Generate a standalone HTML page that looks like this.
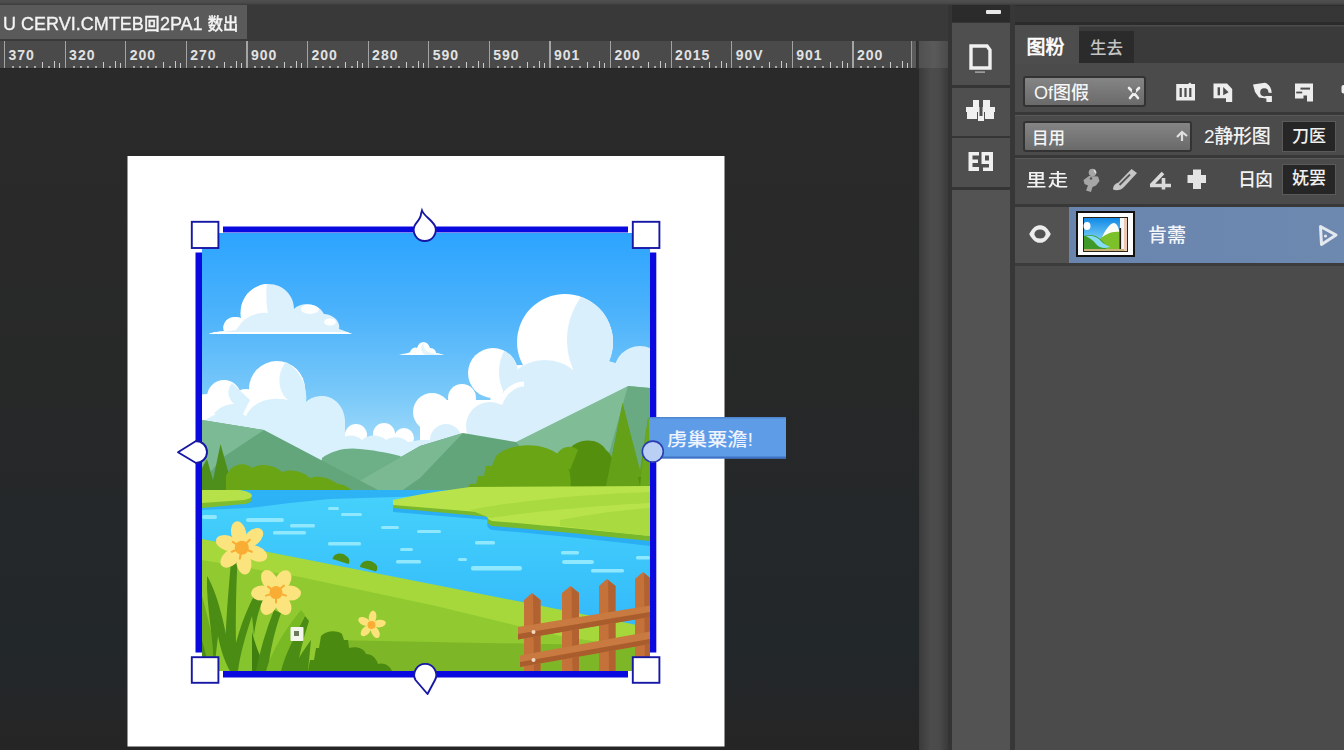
<!DOCTYPE html>
<html lang="zh">
<head>
<meta charset="utf-8">
<title>PS</title>
<style>
*{box-sizing:border-box;margin:0;padding:0}
html,body{width:1344px;height:750px;overflow:hidden;background:#252525;font-family:"Liberation Sans","Noto Sans CJK SC",sans-serif;}
#root{position:relative;width:1344px;height:750px;overflow:hidden;background:#242526;}
.abs{position:absolute}
#topstrip{left:0;top:0;width:1344px;height:5px;background:linear-gradient(#505050,#4a4a4a 60%,#3a3a3a);}
#tabbar{left:0;top:5px;width:950px;height:36px;background:#393939;}
#doctab{left:0;top:5px;width:247px;height:34px;background:#5a5a5a;color:#f4f4f4;font-size:19px;line-height:37px;white-space:nowrap;padding-left:3px;overflow:hidden;font-weight:500;-webkit-text-stroke:0.35px #f4f4f4}
#doctab span{display:inline-block;transform-origin:0 50%;transform:scaleX(0.948)}
#ruler{left:0;top:41px;width:911px;height:27px;background:#4a4a4a;overflow:hidden}
#ruler b{position:absolute;bottom:0;width:1.5px;background:#d4d4d4}
#ruler u{position:absolute;bottom:0;width:2px;height:2.5px;background:#a9a9a9}
#ruler span{position:absolute;top:7px;font-size:14px;font-weight:bold;color:#e2e2e2;letter-spacing:1px;line-height:14px}
#ruler b{position:absolute;bottom:0;width:1.3px;background:#c9c9c9}
#ruler i{position:absolute;top:0;width:1.2px;height:27px;background:#a4a4a4}
#rcorner{left:911px;top:41px;width:8px;height:27px;background:#5a5a5a;border-left:1px solid #9a9a9a}
#vscroll{left:916px;top:41px;width:33px;height:709px;background:linear-gradient(to right,#2c2c2c,#3c3c3c 12%,#4c4c4c 45%,#4a4a4a 70%,#383838)}
#vscrollh{left:919px;top:41px;width:30px;height:27px;background:linear-gradient(to right,#505050,#5a5a5a 50%,#4a4a4a)}
#gap1{left:948px;top:5px;width:4px;height:745px;background:#343434}
#strip{left:952px;top:5px;width:58px;height:745px;background:#353535}
#striptop{left:952px;top:5px;width:58px;height:17px;background:#2b2b2b}
.sbtn{left:952px;width:58px;background:#4f4f4f}
#gap2{left:1010px;top:5px;width:5px;height:745px;background:#373737}
#panel{left:1015px;top:5px;width:329px;height:745px;background:#4b4b4b}
#ptop{left:1015px;top:5px;width:329px;height:20px;background:#363636;border-bottom:3px solid #2b2b2b;border-top:1px solid #2e2e2e}
#ptabs{left:1015px;top:25px;width:329px;height:38px;background:#3a3a3a;box-shadow:inset 0 1.5px 0 #4c4c4c}
#ptab1{left:1015px;top:26px;width:64px;height:38px;background:#4d4d4d;color:#fff;font-size:19px;line-height:43px;text-align:left;padding-left:11.5px;font-weight:500;-webkit-text-stroke:0.4px #fff}
#ptab2{left:1079px;top:31px;width:55px;height:32px;background:#2b2b2b;color:#c4c4c4;font-size:16.5px;line-height:34px;text-align:center;font-weight:500}
.sep{left:1015px;width:329px;height:4px;background:#383838;border-bottom:1.5px solid #595959}
.dd{background:linear-gradient(#858585,#6a6a6a);border:2px solid #333;border-radius:3px;color:#f6f6f6;font-size:18px;white-space:nowrap;font-weight:500}
.dark{background:#262626;border:1px solid #5a5a5a;color:#f0f0f0;font-size:17px;text-align:center;font-weight:500}
.lbl{color:#f2f2f2;font-size:17px;white-space:nowrap;font-weight:500}
#layer{left:1069px;top:207px;width:275px;height:56px;background:linear-gradient(to right,#6985ae,#6e89b0)}
#eyecol{left:1015px;top:207px;width:54px;height:56px;background:#525252}
</style>
</head>
<body>
<div id="root">
<div id="topstrip" class="abs"></div>
<div id="tabbar" class="abs"></div>
<div id="doctab" class="abs"><span id="dts">U CERVI.CMTEB<span style="font-size:17px">回</span>2PA1 <span style="font-size:17px">数出</span></span></div>
<div id="ruler" class="abs"><i style="left:4.0px"></i><span style="left:8.5px">370</span><u style="left:12px"></u><u style="left:19px"></u><u style="left:26px"></u><u style="left:34px"></u><u style="left:48px"></u><b style="left:42px;height:6px"></b><b style="left:54px;height:7px"></b><b style="left:59px;height:5px"></b><i style="left:64.6px"></i><span style="left:69.1px">320</span><u style="left:73px"></u><u style="left:80px"></u><u style="left:87px"></u><u style="left:95px"></u><u style="left:109px"></u><b style="left:103px;height:6px"></b><b style="left:115px;height:7px"></b><b style="left:120px;height:5px"></b><i style="left:125.2px"></i><span style="left:129.7px">200</span><u style="left:133px"></u><u style="left:140px"></u><u style="left:147px"></u><u style="left:155px"></u><u style="left:169px"></u><b style="left:163px;height:6px"></b><b style="left:175px;height:7px"></b><b style="left:180px;height:5px"></b><i style="left:185.8px"></i><span style="left:190.3px">270</span><u style="left:194px"></u><u style="left:201px"></u><u style="left:208px"></u><u style="left:216px"></u><u style="left:230px"></u><b style="left:224px;height:6px"></b><b style="left:236px;height:7px"></b><b style="left:241px;height:5px"></b><i style="left:246.4px"></i><span style="left:250.9px">900</span><u style="left:254px"></u><u style="left:261px"></u><u style="left:268px"></u><u style="left:276px"></u><u style="left:290px"></u><b style="left:284px;height:6px"></b><b style="left:296px;height:7px"></b><b style="left:301px;height:5px"></b><i style="left:307.0px"></i><span style="left:311.5px">200</span><u style="left:315px"></u><u style="left:322px"></u><u style="left:329px"></u><u style="left:337px"></u><u style="left:351px"></u><b style="left:345px;height:6px"></b><b style="left:357px;height:7px"></b><b style="left:362px;height:5px"></b><i style="left:367.6px"></i><span style="left:372.1px">280</span><u style="left:376px"></u><u style="left:383px"></u><u style="left:390px"></u><u style="left:398px"></u><u style="left:412px"></u><b style="left:406px;height:6px"></b><b style="left:418px;height:7px"></b><b style="left:423px;height:5px"></b><i style="left:428.2px"></i><span style="left:432.7px">590</span><u style="left:436px"></u><u style="left:443px"></u><u style="left:450px"></u><u style="left:458px"></u><u style="left:472px"></u><b style="left:466px;height:6px"></b><b style="left:478px;height:7px"></b><b style="left:483px;height:5px"></b><i style="left:488.8px"></i><span style="left:493.3px">590</span><u style="left:497px"></u><u style="left:504px"></u><u style="left:511px"></u><u style="left:519px"></u><u style="left:533px"></u><b style="left:527px;height:6px"></b><b style="left:539px;height:7px"></b><b style="left:544px;height:5px"></b><i style="left:549.4px"></i><span style="left:553.9px">901</span><u style="left:557px"></u><u style="left:564px"></u><u style="left:571px"></u><u style="left:579px"></u><u style="left:593px"></u><b style="left:587px;height:6px"></b><b style="left:599px;height:7px"></b><b style="left:604px;height:5px"></b><i style="left:610.0px"></i><span style="left:614.5px">200</span><u style="left:618px"></u><u style="left:625px"></u><u style="left:632px"></u><u style="left:640px"></u><u style="left:654px"></u><b style="left:648px;height:6px"></b><b style="left:660px;height:7px"></b><b style="left:665px;height:5px"></b><i style="left:670.6px"></i><span style="left:675.1px">2015</span><u style="left:679px"></u><u style="left:686px"></u><u style="left:693px"></u><u style="left:701px"></u><u style="left:715px"></u><b style="left:709px;height:6px"></b><b style="left:721px;height:7px"></b><b style="left:726px;height:5px"></b><i style="left:731.2px"></i><span style="left:735.7px">90V</span><u style="left:739px"></u><u style="left:746px"></u><u style="left:753px"></u><u style="left:761px"></u><u style="left:775px"></u><b style="left:769px;height:6px"></b><b style="left:781px;height:7px"></b><b style="left:786px;height:5px"></b><i style="left:791.8px"></i><span style="left:796.3px">901</span><u style="left:800px"></u><u style="left:807px"></u><u style="left:814px"></u><u style="left:822px"></u><u style="left:836px"></u><b style="left:830px;height:6px"></b><b style="left:842px;height:7px"></b><b style="left:847px;height:5px"></b><i style="left:852.4px"></i><span style="left:856.9px">200</span><u style="left:860px"></u><u style="left:867px"></u><u style="left:874px"></u><u style="left:882px"></u><u style="left:896px"></u><b style="left:890px;height:6px"></b><b style="left:902px;height:7px"></b><b style="left:907px;height:5px"></b><i style="left:912.0px;background:#ddd"></i></div>
<div id="rcorner" class="abs"></div>
<div id="vscroll" class="abs"></div>
<div id="vscrollh" class="abs"></div>
<!--CANVAS-START--><svg class="abs" style="left:0;top:69px" width="919" height="681" viewBox="0 69 919 681">
<defs>
 <linearGradient id="sky" x1="0" y1="233" x2="0" y2="470" gradientUnits="userSpaceOnUse">
  <stop offset="0" stop-color="#2ca4ff"/><stop offset="0.35" stop-color="#4db3fb"/><stop offset="0.7" stop-color="#7ccaf9"/><stop offset="1" stop-color="#b4e3fa"/>
 </linearGradient>
 <linearGradient id="water" x1="0" y1="490" x2="0" y2="630" gradientUnits="userSpaceOnUse">
  <stop offset="0" stop-color="#46d2fb"/><stop offset="0.5" stop-color="#3cc6fb"/><stop offset="1" stop-color="#34b8fa"/>
 </linearGradient>
 <linearGradient id="cbg" x1="0" y1="69" x2="0" y2="750" gradientUnits="userSpaceOnUse"><stop offset="0" stop-color="#2a2a2a"/><stop offset="0.45" stop-color="#272828"/><stop offset="0.85" stop-color="#22272a"/><stop offset="1" stop-color="#262525"/></linearGradient>
 <clipPath id="cC1"><circle cx="565" cy="342" r="48"/></clipPath><clipPath id="cC2"><circle cx="493" cy="373" r="25"/></clipPath>
 <clipPath id="imgclip"><rect x="202" y="233" width="448" height="438"/></clipPath>
 <clipPath id="cA"><path id="cAp" d="M209 334 C216 331 222 332 224 331 C221 322 230 314 241 318 C238 297 254 284 268 284 C284 284 294 296 294 309 C300 302 318 302 324 314 C332 314 341 321 339 329 C343 330 347 332 352 334 Z"/></clipPath>
</defs>
<rect x="0" y="69" width="919" height="681" fill="url(#cbg)"/>
<rect x="127.5" y="156" width="597" height="590.5" fill="#fff"/>
<g clip-path="url(#imgclip)">
 <rect x="202" y="233" width="448" height="260" fill="url(#sky)"/>
 <!-- cloud A -->
 <path d="M209 334 C216 331 222 332 224 331 C221 322 230 314 241 318 C238 297 254 284 268 284 C284 284 294 296 294 309 C300 302 318 302 324 314 C332 314 341 321 339 329 C343 330 347 332 352 334 Z" fill="#ddf1fc"/>
 <g clip-path="url(#cA)" fill="#fff">
  <path d="M230 280 H267 C266 292 266 304 268 313 C258 312 248 316 242 322 L236 330 L209 334 V320 Z"/>
  <ellipse cx="310" cy="309" rx="9" ry="5"/>
  <ellipse cx="330" cy="322" rx="6" ry="3.5"/>
  <rect x="205" y="332" width="150" height="2"/>
 </g>
 <!-- cloud B -->
 <path d="M399 355 C404 353 408 354 410 352 C412 347 416 347 417 348 C419 340 428 340 430 348 C434 348 436 351 436 353 C439 353 441 354 444 355 Z" fill="#fff"/>
 <path d="M424 342 C422 348 426 352 432 353 L436 354 L444 355 L425 355 C420 352 420 346 424 342Z" fill="#e3f4fd"/>
 <!-- cloud C big right -->
 <g fill="#fff">
  <circle cx="565" cy="342" r="48"/>
  <circle cx="493" cy="373" r="25"/>
  <circle cx="462" cy="398" r="14"/>
  <circle cx="432" cy="412" r="19"/>
  <circle cx="446" cy="424" r="22"/>
  <rect x="420" y="400" width="232" height="80"/>
  <circle cx="520" cy="395" r="30"/>
 </g>
 <g clip-path="url(#cC1)"><circle cx="640" cy="340" r="73" fill="#d9f0fc"/></g>
 <g clip-path="url(#cC2)"><circle cx="545" cy="372" r="46" fill="#d9f0fc"/></g>
 <g fill="#d9f0fc">
  <circle cx="640" cy="372" r="26"/>
  <circle cx="545" cy="404" r="44"/>
  <circle cx="600" cy="400" r="40"/>
  <rect x="560" y="372" width="92" height="100"/>
  <circle cx="490" cy="426" r="24"/>
  <circle cx="515" cy="440" r="22"/>
  <circle cx="446" cy="440" r="16"/>
  <rect x="420" y="440" width="232" height="40"/>
 </g>
 <path d="M500 404 C504 392 514 384 524 384" fill="none" stroke="#fff" stroke-width="5"/>
 <!-- cloud D low left -->
 <g fill="#fff">
  <circle cx="277" cy="389" r="28"/>
  <circle cx="224" cy="397" r="17"/>
  <circle cx="206" cy="408" r="14"/>
  <circle cx="246" cy="405" r="16"/>
  <circle cx="356" cy="435" r="11"/>
  <circle cx="384" cy="434" r="11"/>
  <circle cx="404" cy="438" r="10"/>
 </g>
 <g fill="#d9f1fc">
  <path d="M286 362 C276 374 278 392 288 400 C270 396 252 402 246 416 C232 408 212 412 202 424 V480 H345 V420 C344 406 334 396 322 396 C316 396 310 398 306 402 C308 386 300 370 286 362 Z"/>
  <path d="M232 383 C226 390 228 398 234 404 C226 404 218 408 214 414 L240 420 L250 400 Z"/>
  <path d="M340 440 C346 434 356 434 362 440 C368 434 380 434 386 440 C392 436 402 436 408 442 L420 440 V480 H340 Z"/>
 </g>
 <!-- mountains -->
 <path d="M318 492 L322 458 C332 450 348 447 360 449 C372 450 384 452 400 456 L440 492 Z" fill="#6db088"/>
 <path d="M516 442 L628 386 L650 388 V492 H470 Z" fill="#80bc96"/>
 <path d="M628 386 L650 388 V492 H598 Z" fill="#69aa82"/>
 <path d="M340 492 L420 446 L463 433 L516 442 L560 492 Z" fill="#63a57b"/>
 <path d="M340 492 L420 446 L463 433 L420 478 L400 492 Z" fill="#7bb993"/>
 <path d="M202 420 L264 430 L378 490 L202 492 Z" fill="#63a67c"/>
 <path d="M202 420 L264 430 L222 458 L202 482 Z" fill="#7cba95"/>
 <!-- left trees -->
 <path d="M202 468 L207 459 L213 480 L220.5 444 L230 478 L236 492 H202 Z" fill="#4e8f1b"/>
 <path d="M226 476 C232 462 246 462 252 468 C262 462 276 466 282 472 C292 468 304 472 310 478 C322 474 332 480 338 484 C344 484 350 488 354 493 H226 Z" fill="#6aa516"/>
 <!-- right trees -->
 <path d="M572 490 L590 470 L606 486 L622.6 403 L640 470 L648 418 L650 422 V490 Z" fill="#64a119"/>
 <path d="M560 490 C556 470 560 458 568 452 C574 438 598 436 606 450 C614 456 616 470 612 480 L650 476 V490 Z" fill="#548f0d"/>
 <path d="M606 486 L622.6 403 L640 486 Z" fill="#64a119"/>
 <path d="M640 486 L648 418 L650 424 V486 Z" fill="#6aa81c"/>
 <path d="M466 490 L470 484 H476 L478 476 H484 L486 466 H492 L496 456 C510 442 548 440 564 460 C570 468 572 480 570 490 Z" fill="#6aa516"/>
 <path d="M556 456 C560 446 572 444 578 450 L570 470 Z" fill="#6aa516"/>
 <!-- water -->
 <rect x="202" y="490" width="448" height="150" fill="url(#water)"/>
 <path d="M202 490 H470 L430 496 L330 499 L290 503 L250 508 L202 510 Z" fill="#2db2f6"/>
 <!-- left island -->
 <path d="M202 496 H246 C254 498 254 502 244 504 L202 508 Z" fill="#7fbd2e"/>
 <path d="M202 490 H240 C254 492 256 498 244 500 L202 503 Z" fill="#b6e148"/>
 <!-- right bank -->
 <path d="M393 505 C420 500 440 498 470 494 L650 494 V546 C600 540 540 534 492 530 C486 528 486 522 490 520 L393 512 Z" fill="#2aaef4"/>
 <path d="M393 502 C420 496 440 494 470 490 L650 490 V541 C600 536 540 530 492 526 C486 524 486 519 490 517 L393 508 Z" fill="#78b82c"/>
 <path d="M393 500 C420 494 440 491 470 487 L650 486 V536 C600 531 540 525 492 521 C486 519 486 515 490 513 L393 505 Z" fill="#b9e34a"/>
 <path d="M470 510 C520 500 590 494 650 492 V503 C590 506 530 512 490 518 Z" fill="#a9da40"/>
 <path d="M560 520 C590 514 620 510 650 508 V536 C620 533 590 529 560 526 Z" fill="#a9da40"/>
 <!-- ripples -->
 <g fill="#8fe8fd">
  <rect x="328" y="507" width="11" height="3" rx="1.5"/><rect x="341" y="513" width="21" height="3" rx="1.5"/>
  <rect x="246" y="518" width="38" height="4" rx="2"/><rect x="290" y="524" width="25" height="3.5" rx="1.5"/>
  <rect x="273" y="531" width="33" height="3.5" rx="1.5"/><rect x="328" y="542" width="33" height="3.5" rx="1.5"/>
  <rect x="381" y="526" width="18" height="3" rx="1.5"/><rect x="400" y="548" width="13" height="3" rx="1.5"/>
  <rect x="396" y="560" width="25" height="3.5" rx="1.5"/><rect x="417" y="530" width="24" height="3" rx="1.5"/>
  <rect x="202" y="515" width="15" height="4" rx="2"/>
  <rect x="475" y="541" width="20" height="3.5" rx="1.5"/><rect x="458" y="558" width="9" height="3" rx="1.5"/>
  <rect x="471" y="566" width="51" height="4.5" rx="2"/><rect x="561" y="551" width="18" height="3.5" rx="1.5"/>
  <rect x="562" y="560" width="32" height="4" rx="2"/><rect x="591" y="569" width="33" height="3.5" rx="1.5"/>
  <rect x="636" y="556" width="14" height="3.5" rx="1.5"/>
 </g>
 <!-- foreground grass -->
 <path d="M202 539 L436 585 L632 624 L650 628 V671 H202 Z" fill="#a6d83b"/>
 <path d="M202 560 L300 577 L436 606 L560 636 L650 650 V671 H202 Z" fill="#90ca30"/>
 <path d="M330 640 L650 646 V671 H330 Z" fill="#7db626"/>
 <!-- small bushes at shore -->
 <path d="M332.5 559 C334 553 342 552 346 556 C350 558 350 562 348.5 564 Z" fill="#4f9016"/>
 <path d="M360 567 C361 560 370 559 374 563 C378 565 378 569 376 571.5 Z" fill="#4f9016"/>
 <!-- dark bush -->
 <path d="M308 671 L310 660 H314 L316 648 H319 L321 636 C326 630 338 630 342 634 L344 640 H348 L349 648 C356 646 364 648 366 654 C372 654 376 658 378 664 C384 662 390 666 392 671 Z" fill="#4b8a10"/>
 <!-- grass blades -->
 <g>
  <path d="M202 596 C208 616 214 648 222 671 H202 Z" fill="#6eae1e"/>
  <path d="M207 576 C216 590 226 624 232 671 H214 C214 640 206 606 207 576 Z" fill="#4b8c14"/>
  <path d="M231 560 C229 590 224 630 226 671 H237 C235 630 236 590 237.5 562 Z" fill="#4b8c14"/>
  <path d="M255 594 C242 618 233 648 231 671 H252 C252 648 254 620 263 600 Z" fill="#4b8c14"/>
  <path d="M252 616 C246 634 240 654 238 671 H256 C256 654 254 634 252 616 Z" fill="#85c42c"/>
  <path d="M252 632 C256 648 262 660 266 671 H252 Z" fill="#3f7f10"/>
  <path d="M274 610 C266 630 260 650 256 671 H268 C270 650 275 630 281 613 Z" fill="#4b8c14"/>
  <path d="M301 610 C286 628 272 650 266 671 H290 C292 650 297 630 305 615 Z" fill="#79ba24"/>
  <path d="M305 616 C294 638 285 655 281 671 H297 C299 655 303 640 309 621 Z" fill="#4b8c14"/>
  <path d="M311 640 C302 652 296 662 292 671 H308 Z" fill="#4b8c14"/>
  <path d="M218 636 C221 652 226 664 230 671 H214 Z" fill="#8ac82e"/>
  <path d="M202 640 C206 655 208 664 212 671 H202 Z" fill="#4b8c14"/>
 </g>
 <!-- flowers -->
 <g id="fl1" transform="translate(241.8 547.8)">
  <g fill="#fbe37e">
   <ellipse cx="0" cy="-15" rx="7.5" ry="12" transform="rotate(-12)"/>
   <ellipse cx="0" cy="-15" rx="7.5" ry="12" transform="rotate(48)"/>
   <ellipse cx="0" cy="-15" rx="7.5" ry="12" transform="rotate(112)"/>
   <ellipse cx="0" cy="-15" rx="7.5" ry="12" transform="rotate(172)"/>
   <ellipse cx="0" cy="-15" rx="7.5" ry="12" transform="rotate(228)"/>
   <ellipse cx="0" cy="-15" rx="7.5" ry="12" transform="rotate(288)"/>
  </g>
  <circle r="7" fill="#f9ad34"/>
  <g stroke="#f9ad34" stroke-width="2" stroke-linecap="round"><path d="M0 0 L-9 -6 M0 0 L8 -8 M0 0 L10 4 M0 0 L-2 11 M0 0 L-10 4"/></g>
 </g>
 <g id="fl2" transform="translate(276 592.6)">
  <g fill="#fbe37e">
   <ellipse cx="0" cy="-14" rx="7.5" ry="11" transform="rotate(-28)"/>
   <ellipse cx="0" cy="-14" rx="7.5" ry="11" transform="rotate(30)"/>
   <ellipse cx="0" cy="-14" rx="7.5" ry="11" transform="rotate(92)"/>
   <ellipse cx="0" cy="-14" rx="7.5" ry="11" transform="rotate(150)"/>
   <ellipse cx="0" cy="-14" rx="7.5" ry="11" transform="rotate(210)"/>
   <ellipse cx="0" cy="-14" rx="7.5" ry="11" transform="rotate(268)"/>
  </g>
  <circle r="6.5" fill="#f9ad34"/>
  <g stroke="#f9ad34" stroke-width="2" stroke-linecap="round"><path d="M0 0 L-8 -6 M0 0 L8 -7 M0 0 L10 3 M0 0 L0 10 M0 0 L-10 3"/></g>
 </g>
 <g id="fl3" transform="translate(371.5 625)">
  <g fill="#fbe27a">
   <ellipse cx="0" cy="-8" rx="3.8" ry="6.5" transform="rotate(8)"/>
   <ellipse cx="0" cy="-8" rx="3.8" ry="6.5" transform="rotate(80)"/>
   <ellipse cx="0" cy="-8" rx="3.8" ry="6.5" transform="rotate(152)"/>
   <ellipse cx="0" cy="-8" rx="3.8" ry="6.5" transform="rotate(224)"/>
   <ellipse cx="0" cy="-8" rx="3.8" ry="6.5" transform="rotate(296)"/>
  </g>
  <circle r="4" fill="#f9ad34"/>
 </g>
 <!-- fence -->
 <g>
  <path d="M524 671 V600 L532 593 L540.5 600 V671 Z" fill="#c5713a"/><path d="M533 594 L540.5 600 V671 H534 Z" fill="#b26230"/>
  <path d="M562 671 V593 L570.5 586 L579 593 V671 Z" fill="#c5713a"/><path d="M571.5 587 L579 593 V671 H572.5 Z" fill="#b26230"/>
  <path d="M599 671 V586 L607 579 L615.5 586 V671 Z" fill="#c5713a"/><path d="M608 580 L615.5 586 V671 H609 Z" fill="#b26230"/>
  <path d="M635 671 V579 L643 572 L650 578 V671 Z" fill="#c5713a"/><path d="M644 573 L650 578 V671 H645 Z" fill="#b26230"/>
  <path d="M518 627 L650 605.5 V617 L518 639.5 Z" fill="#c87a40"/><path d="M518 634 L650 612 V617 L518 639.5 Z" fill="#a95c2c"/>
  <path d="M520 655.5 L650 631.5 V644 L520 667 Z" fill="#c87a40"/><path d="M520 662 L650 639 V644 L520 667 Z" fill="#a95c2c"/>
  <circle cx="533.5" cy="632" r="2" fill="#f3d9c0"/><circle cx="533.5" cy="660" r="2" fill="#f3d9c0"/>
 </g>
 <rect x="290.5" y="627" width="13" height="14" rx="1" fill="#f4f6ee"/><rect x="294" y="631" width="5" height="5" fill="#6a7a5a"/>
</g>
<!-- transform frame -->
<g fill="#0a0ae0">
 <rect x="223" y="226.5" width="405" height="6"/>
 <rect x="223" y="671" width="405" height="6.5"/>
 <rect x="195.5" y="252.5" width="6.5" height="400"/>
 <rect x="650" y="252.5" width="6.3" height="400"/>
</g>
<g fill="#fff" stroke="#1717a6" stroke-width="1.9">
 <rect x="191.8" y="221.8" width="26.6" height="26.2"/>
 <rect x="632.8" y="221.8" width="26.6" height="26.2"/>
 <rect x="191.8" y="657.2" width="26.6" height="25.6"/>
 <rect x="632.8" y="657.2" width="26.6" height="25.6"/>
 <path d="M422 210.5 C424 216 432 220 435 226 A11 11 0 1 1 414.5 226 C416 222 421 219 421 214 Z"/>
 <path d="M178 452.3 L196 441 A11 11 0 1 1 196 463 Z" stroke-linejoin="round"/>
 <path d="M427.5 694 L435 680 A11 11 0 1 0 415.5 680 Z" stroke-linejoin="round"/>
</g>
<rect x="649" y="417" width="137" height="41.5" fill="#5e9ce8"/>
<rect x="649" y="417" width="137" height="1.5" fill="#4f86d0"/>
<rect x="649" y="456.5" width="137" height="2" fill="#3f72c4"/>
<circle cx="652.8" cy="451.6" r="10.5" fill="#b9d0f4" stroke="#2b3fb0" stroke-width="1.6"/>
<text x="667" y="445.5" font-family="'Liberation Sans','Noto Sans CJK SC',sans-serif" font-size="18.5" font-weight="500" fill="#eef3fd" textLength="86" lengthAdjust="spacingAndGlyphs">虏巢粟澹!</text>
</svg>
<!--CANVAS-END-->
<div id="gap1" class="abs"></div>
<div id="strip" class="abs"></div>
<div id="striptop" class="abs"></div>
<div class="abs" style="left:986px;top:10px;width:15px;height:4px;background:#e8e8e8;border-radius:1px"></div>
<div class="abs sbtn" style="top:23px;height:62px"></div>
<div class="abs sbtn" style="top:88px;height:48px"></div>
<div class="abs sbtn" style="top:138px;height:49px"></div>
<div class="abs sbtn" style="top:190px;height:560px;background:#535353"></div>
<svg class="abs" style="left:952px;top:23px" width="58" height="165" viewBox="952 23 58 165">
 <path d="M971 46 H987 L990 50 V68 H971 Z" fill="none" stroke="#f0f0f0" stroke-width="3.4" stroke-linejoin="miter"/>
 <rect x="975" y="71.5" width="10" height="1.2" fill="#bdbdbd"/>
 <g fill="#f0f0f0">
  <rect x="973" y="100" width="6" height="8"/><rect x="983" y="100" width="7" height="10"/>
  <rect x="966" y="107" width="29" height="5"/><rect x="967" y="112" width="10" height="7"/><rect x="985" y="112" width="9" height="7"/>
  <rect x="978" y="110" width="6" height="11"/>
 </g>
 <rect x="979.5" y="104" width="3" height="12" fill="#4f4f4f"/>
 <g fill="#f0f0f0">
  <path d="M968.5 152 H979 V155.5 H972.5 V159.5 H978 V163 H972.5 V167 H979 V171 H968.5 Z"/>
  <path d="M981.5 152 H993 V171 H983 V167.5 H989 V164 H981.5 Z M985 155.5 V160.5 H989 V155.5 Z" fill-rule="evenodd"/>
 </g>
</svg>
<div id="gap2" class="abs"></div>
<div id="panel" class="abs"></div>
<div id="ptop" class="abs"></div>
<div id="ptabs" class="abs"></div>
<div id="ptab1" class="abs">图粉</div>
<div id="ptab2" class="abs">生去</div>
<div class="abs sep" style="top:112px"></div>
<div class="abs sep" style="top:155px"></div>
<div class="abs sep" style="top:204px"></div>
<div class="abs dd" style="left:1023px;top:76px;width:123px;height:31px;line-height:30px;padding-left:9px">Of图假</div>
<svg class="abs" style="left:1126px;top:85px" width="16" height="16" viewBox="0 0 16 16"><path d="M3 3 L8 8 L13 3 M8 8 L4 13 M8 8 L12 13" stroke="#f0f0f0" stroke-width="2.6" fill="none" stroke-linecap="round"/><circle cx="8" cy="6" r="2.2" fill="#6c6c6c"/></svg>
<svg class="abs" style="left:1174px;top:80px" width="170" height="26" viewBox="1174 80 170 26">
 <g fill="#ededed">
  <path d="M1176.2 84 H1188 L1190 82.6 L1191.5 84 H1195 V100.5 H1176.2 Z"/>
  <path d="M1213.5 83.5 H1227 L1232.2 89 V102 H1226 V98.2 H1213.5 Z"/>
  <path d="M1253 84.5 L1265 82.8 C1269 84 1271.5 88 1271.7 93 V102 H1266.5 V98.5 L1259 97.5 L1255 92 Z"/>
  <path d="M1295 83.5 H1313 V101.5 H1307 V95.5 H1303.5 V98.5 H1295 Z"/>
  <rect x="1341.5" y="85" width="4" height="8.5" rx="2"/>
 </g>
 <g fill="#4d4d4d">
  <rect x="1179.6" y="88" width="2.2" height="9"/><rect x="1184.4" y="88" width="2.2" height="9"/><rect x="1189.2" y="88" width="2.2" height="9"/>
  <rect x="1217.6" y="87.3" width="2.4" height="8"/>
  <path d="M1223.2 87 L1228.6 92.2 L1223.2 95.2 Z"/>
  <circle cx="1264.3" cy="92.3" r="4.1"/>
  <path d="M1264.3 92.3 L1272 93 V96 H1266 Z"/>
  <rect x="1300.5" y="87.6" width="9.5" height="2"/>
  <rect x="1296.2" y="91.6" width="6" height="1.8"/>
 </g>
 <rect x="1266.8" y="96.2" width="4.9" height="5.6" fill="#ededed"/>
</svg>
<div class="abs dd" style="left:1023px;top:121px;width:169px;height:31px;line-height:31px;padding-left:7px;font-size:16.5px">目用</div>
<svg class="abs" style="left:1174px;top:128px" width="16" height="16" viewBox="0 0 16 16"><path d="M3 9 L8 4 L13 8 M8 5 V13" stroke="#e0e0e0" stroke-width="2.2" fill="none"/></svg>
<div class="abs lbl" style="left:1204px;top:124px;line-height:26px;font-size:19px;letter-spacing:-0.3px">2静形图</div>
<div class="abs dark" style="left:1282px;top:121px;width:54px;height:31px;line-height:30px">刀医</div>
<div class="abs lbl" style="left:1026px;top:168px;font-size:17.5px;line-height:25px;letter-spacing:1px;transform:scaleX(1.17);transform-origin:0 50%">里走</div>
<svg class="abs" style="left:1080px;top:165px" width="130" height="30" viewBox="1080 165 130 30">
 <g fill="#a6a6a6">
  <ellipse cx="1092.5" cy="172.5" rx="3.8" ry="3.8"/>
  <path d="M1083.5 180 L1089 176 L1098 176.5 L1099.5 181 L1096 185.5 L1092.5 187 L1091 192 L1086 190.5 L1088 185.5 L1084.5 184 Z"/>
 </g>
 <circle cx="1091" cy="178.5" r="1.3" fill="#555"/>
 <path d="M1094 170 L1096 173" stroke="#e0e0e0" stroke-width="1.4"/>
 <path d="M1131.5 169 L1137 173 L1124.5 186.5 C1121 190.5 1116 191 1113 189.5 C1113 186 1115 183.5 1118.5 182.5 Z" fill="#c6c6c6"/>
 <path d="M1119.5 185 L1130 174.5" stroke="#555" stroke-width="1.8"/>
 <path d="M1151 185.5 L1163 173 M1150 185.5 H1171 M1163.5 178 V189.5" stroke="#dadada" stroke-width="3.6" fill="none" stroke-linejoin="round"/>
 <path d="M1193 169.5 H1201 V175 H1206 V183 H1201 V189 H1193 V183 H1187.5 V175 H1193 Z" fill="#e4e4e4"/>
</svg>
<div class="abs lbl" style="left:1238px;top:168px;line-height:25px;font-size:18px;letter-spacing:-1px">日囟</div>
<div class="abs dark" style="left:1282px;top:164px;width:54px;height:31px;line-height:28px">妩罢</div>
<div class="abs" style="left:1015px;top:263px;width:329px;height:3px;background:#3c3c3c"></div><div id="eyecol" class="abs"></div>
<div id="layer" class="abs"></div>
<svg class="abs" style="left:1027px;top:222px" width="26" height="24" viewBox="0 0 26 24"><path d="M2.2 12 C6 5 9 3.2 13 3.2 C17 3.2 20 5 23.8 12 C20 19 17 20.8 13 20.8 C9 20.8 6 19 2.2 12 Z" fill="#ececec"/><ellipse cx="13" cy="12" rx="5.6" ry="4.6" fill="#525252"/></svg>
<div class="abs" style="left:1076px;top:211px;width:59px;height:46px;background:#fff;border:2px solid #101010"></div>
<svg class="abs" style="left:1083px;top:217px" width="45" height="35" viewBox="0 0 45 35">
 <defs><linearGradient id="tsky" x1="0" y1="0" x2="0" y2="1"><stop offset="0" stop-color="#1489e6"/><stop offset="0.6" stop-color="#6cc8f6"/><stop offset="1" stop-color="#a5e0f4"/></linearGradient>
 <filter id="tb" x="-5%" y="-5%" width="110%" height="110%"><feGaussianBlur stdDeviation="0.7"/></filter></defs>
 <rect width="45" height="35" fill="#2a2418"/>
 <g filter="url(#tb)">
 <rect x="1" y="1" width="43" height="33" fill="url(#tsky)"/>
 <ellipse cx="4" cy="9" rx="3.5" ry="4" fill="#fff"/>
 <path d="M19 20 C24 10 28 6 31 6 C35 7 36 12 37 20 Z" fill="#fdfdf6"/>
 <path d="M17 34 V22 C22 18 28 14 37 15 V34 Z" fill="#7cc02c"/>
 <path d="M1 19 C6 17 12 18 16 21 C20 24 22 28 26 30 L20 33 H1 Z" fill="#3f9a2c"/>
 <path d="M3 19 C9 18 14 20 17 23 C20 27 24 28 27 30 C22 32 16 31 13 27 C10 23 6 21 3 19 Z" fill="#86dcf2"/>
 <rect x="37" y="1" width="4" height="33" fill="#f1f7f8"/>
 <rect x="41" y="1" width="3" height="33" fill="#ecc9b4"/>
 <rect x="36.5" y="11" width="1.6" height="21" fill="#2a1a12"/>
 <rect x="1" y="32" width="40" height="2" fill="#c9b27c"/>
 </g>
</svg>
<div class="abs lbl" style="left:1148px;top:222px;font-size:19px;line-height:28px;color:#f2f4f8">肯薷</div>
<svg class="abs" style="left:1316px;top:222px" width="24" height="26" viewBox="0 0 24 26"><path d="M4.5 4.5 L20 13 L5.5 22.5 Z" fill="none" stroke="#e4e8ef" stroke-width="3" stroke-linejoin="round"/><circle cx="9.5" cy="14" r="1.6" fill="#e4e8ef"/></svg>
<!--PANEL-->
</div>
</body>
</html>
